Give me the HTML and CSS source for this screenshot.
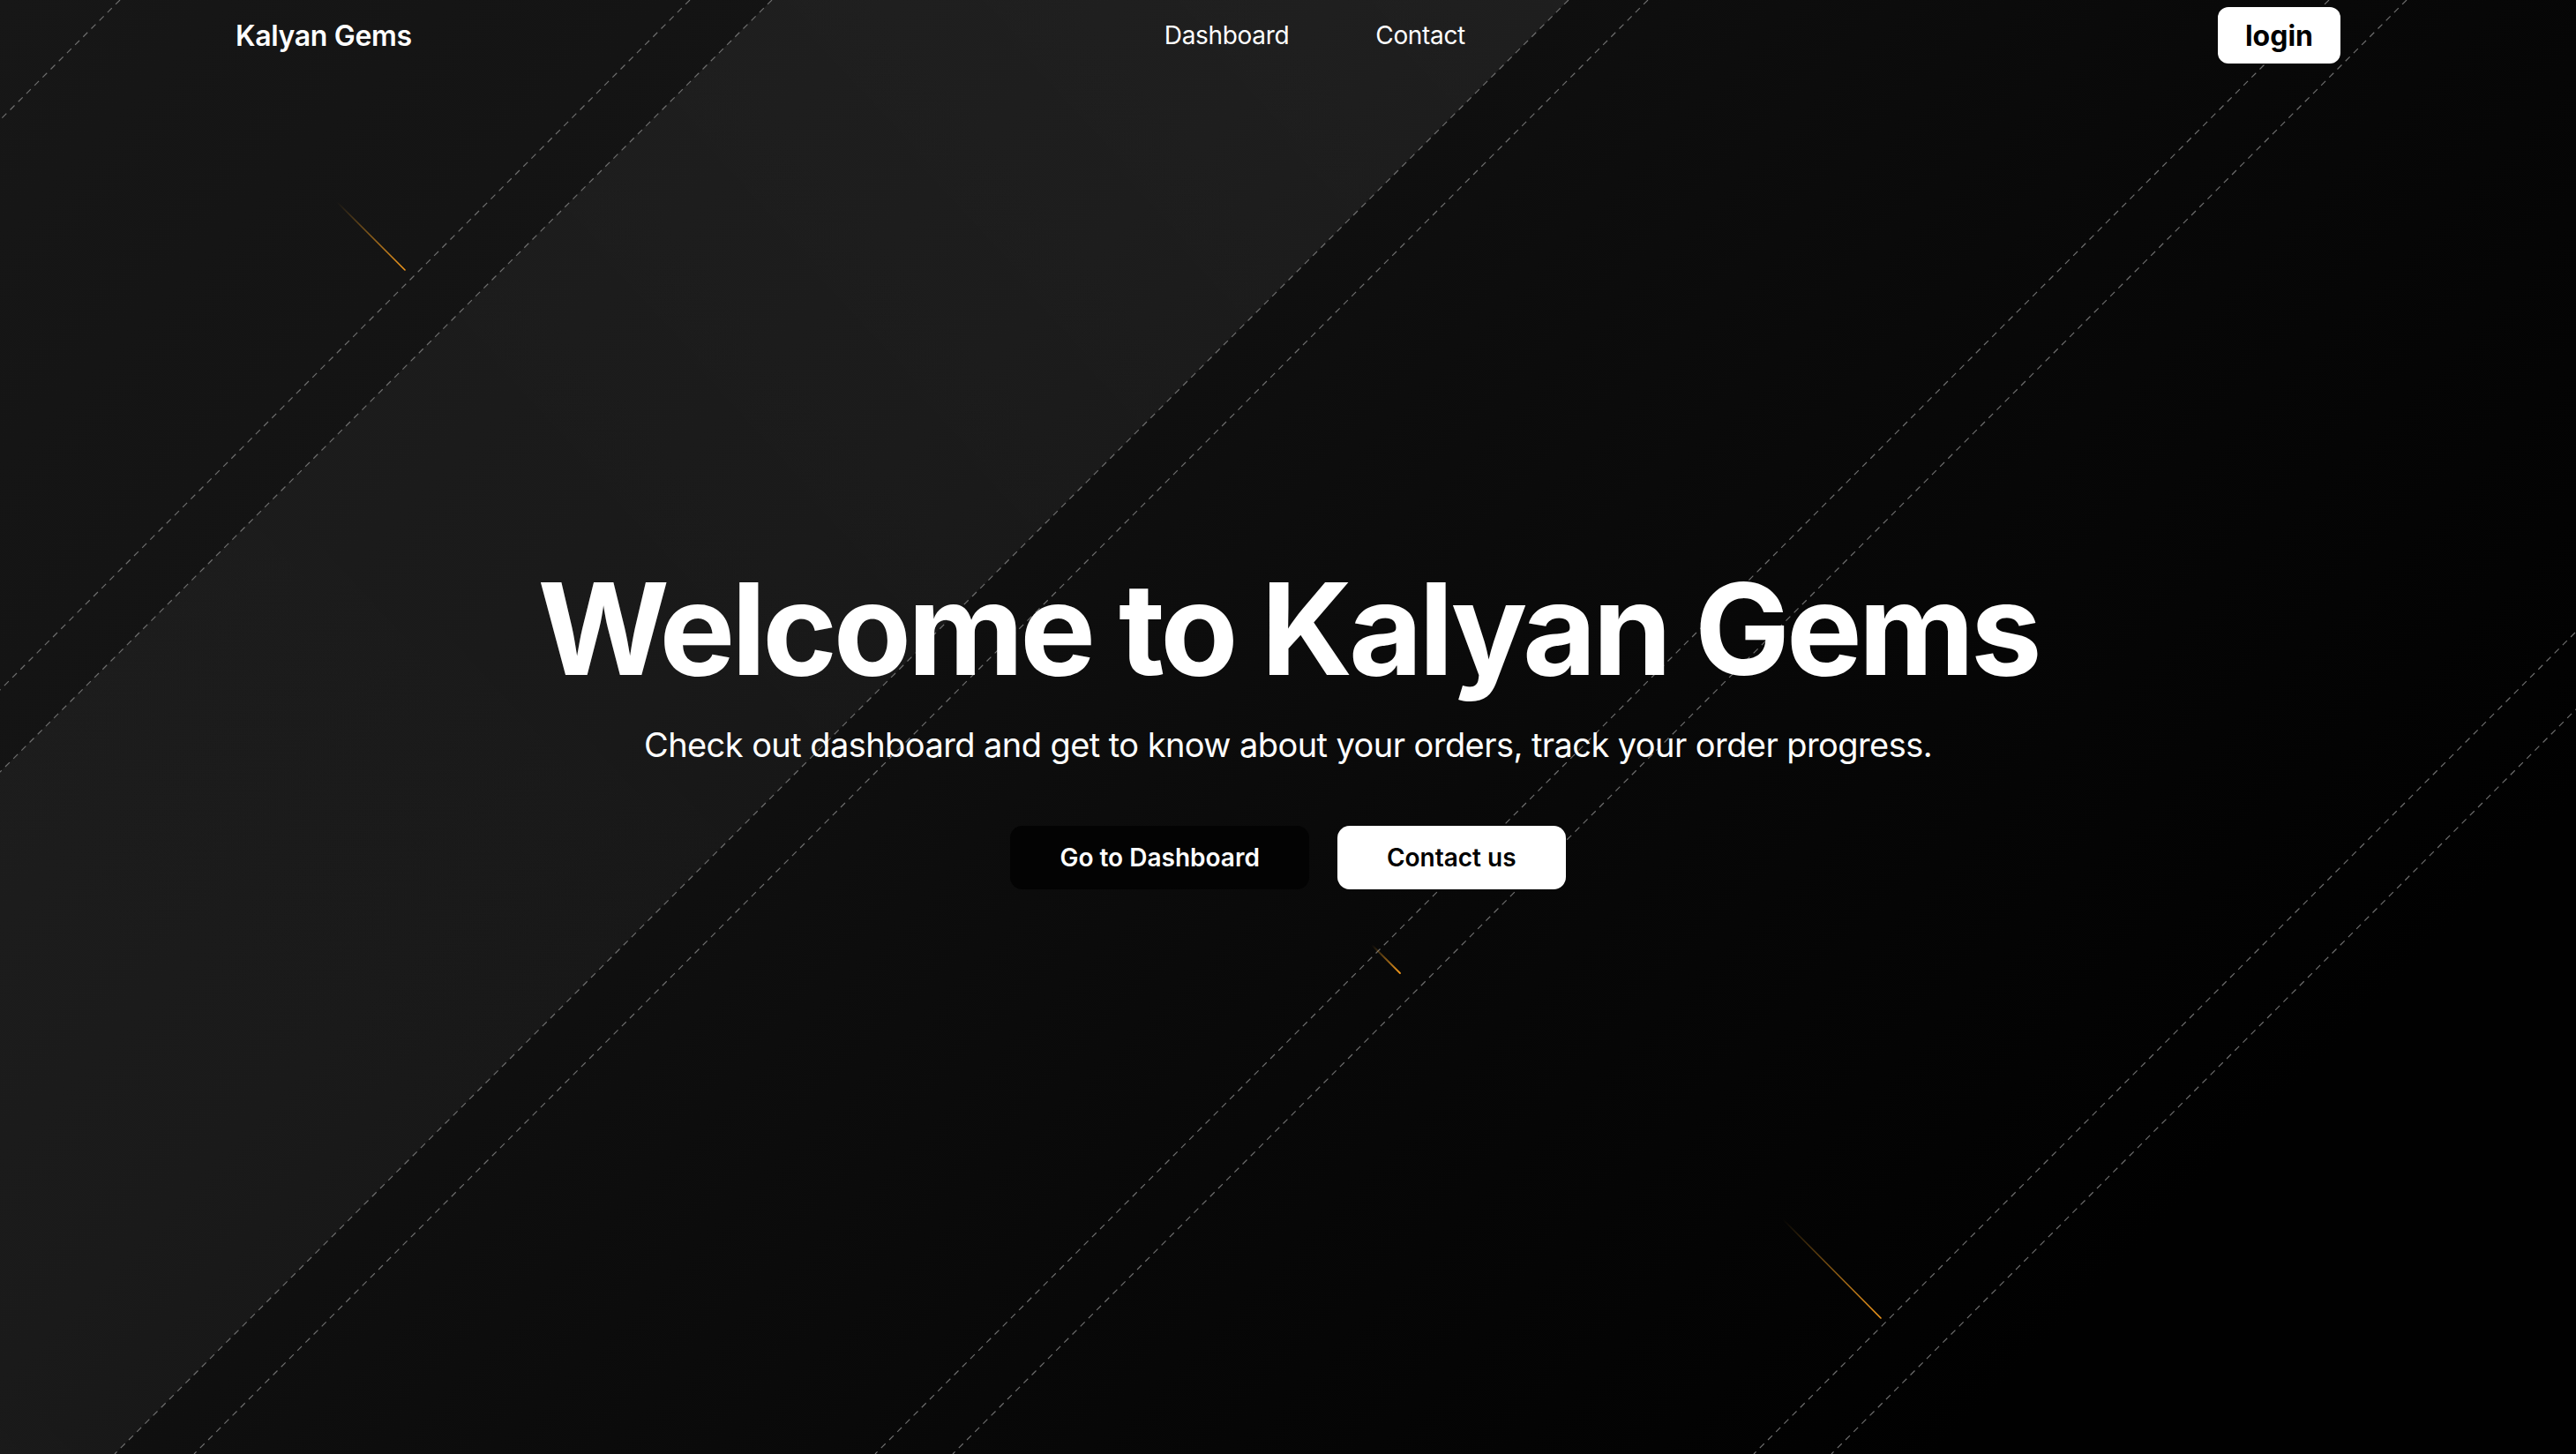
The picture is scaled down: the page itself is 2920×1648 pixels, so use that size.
FILE: index.html
```html
<!DOCTYPE html>
<html lang="en">
<head>
<meta charset="utf-8">
<title>Kalyan Gems</title>
<link rel="stylesheet" href="styles.css">
</head>
<body>
<div class="page">
  <svg class="bg" viewBox="0 0 2920 1648" preserveAspectRatio="none" aria-hidden="true">
    <defs>
      <linearGradient id="base" x1="0" y1="0" x2="1" y2="0.55">
        <stop offset="0" stop-color="#171717"/>
        <stop offset="0.4" stop-color="#111111"/>
        <stop offset="0.7" stop-color="#080808"/>
        <stop offset="1" stop-color="#010101"/>
      </linearGradient>
      <linearGradient id="band" gradientUnits="userSpaceOnUse" x1="1778" y1="0" x2="0" y2="1648">
        <stop offset="0" stop-color="#ffffff" stop-opacity="0.065"/>
        <stop offset="0.5" stop-color="#ffffff" stop-opacity="0.035"/>
        <stop offset="1" stop-color="#ffffff" stop-opacity="0.04"/>
      </linearGradient>
      <linearGradient id="m1" gradientUnits="userSpaceOnUse" x1="382" y1="229" x2="459" y2="306">
        <stop offset="0" stop-color="#f5a524" stop-opacity="0"/>
        <stop offset="1" stop-color="#f59a1c"/>
      </linearGradient>
      <linearGradient id="m2" gradientUnits="userSpaceOnUse" x1="2021" y1="1382" x2="2132" y2="1494">
        <stop offset="0" stop-color="#f5a524" stop-opacity="0"/>
        <stop offset="1" stop-color="#f59a1c"/>
      </linearGradient>
      <linearGradient id="m3" gradientUnits="userSpaceOnUse" x1="1555" y1="1071" x2="1587" y2="1103">
        <stop offset="0" stop-color="#f5a524" stop-opacity="0"/>
        <stop offset="1" stop-color="#f59a1c"/>
      </linearGradient>
    </defs>
    <rect x="0" y="0" width="2920" height="1648" fill="url(#base)"/>
    <polygon points="875,0 1778,0 130,1648 0,1648 0,875" fill="url(#band)"/>
    <g class="dash" stroke="#6f6f6f" stroke-width="1.2" stroke-dasharray="7 6" fill="none">
      <line x1="136" y1="0" x2="-1512" y2="1648"/>
      <line x1="782" y1="0" x2="-866" y2="1648"/>
      <line x1="875" y1="0" x2="-773" y2="1648"/>
      <line x1="1778" y1="0" x2="130" y2="1648"/>
      <line x1="1868" y1="0" x2="220" y2="1648"/>
      <line x1="2640" y1="0" x2="992" y2="1648"/>
      <line x1="2728" y1="0" x2="1080" y2="1648"/>
      <line x1="3636" y1="0" x2="1988" y2="1648"/>
      <line x1="3724" y1="0" x2="2076" y2="1648"/>
    </g>
    <line x1="382" y1="229" x2="459" y2="306" stroke="url(#m1)" stroke-width="1.6" stroke-linecap="round"/>
    <line x1="2021" y1="1382" x2="2132" y2="1494" stroke="url(#m2)" stroke-width="1.6" stroke-linecap="round"/>
    <line x1="1555" y1="1071" x2="1587" y2="1103" stroke="url(#m3)" stroke-width="1.8" stroke-linecap="round"/>
  </svg>

  <header class="nav">
    <a class="brand" href="#">Kalyan Gems</a>
    <nav class="links">
      <a href="#">Dashboard</a>
      <a href="#">Contact</a>
    </nav>
    <button class="login" type="button">login</button>
  </header>

  <main class="hero">
    <h1 class="title">Welcome to Kalyan Gems</h1>
    <p class="subtitle">Check out dashboard and get to know about your orders, track your order progress.</p>
    <div class="actions">
      <button class="btn btn-dark" type="button">Go to Dashboard</button>
      <button class="btn btn-light" type="button">Contact us</button>
    </div>
  </main>
</div>
</body>
</html>
```

FILE: styles.css
```css
* {
  box-sizing: border-box;
}

html,
body {
  margin: 0;
  padding: 0;
  background: #0c0c0c;
}

body {
  font-family: Inter, "Noto Sans", "Liberation Sans", sans-serif;
  color: #ffffff;
}

.page {
  position: relative;
  display: grid;
  height: 100vh;
  overflow: hidden;
}

.bg {
  position: absolute;
  inset: 0;
  width: 100%;
  height: 100%;
  z-index: 0;
}

.nav,
.hero {
  grid-area: 1 / 1;
  position: relative;
  z-index: 1;
}

.nav {
  align-self: start;
  display: flex;
  align-items: center;
  justify-content: space-between;
  height: 80px;
  padding: 0 267px;
}

.brand {
  color: #ffffff;
  text-decoration: none;
  font-size: 32px;
  font-weight: 600;
  letter-spacing: -0.01em;
}

.links {
  display: flex;
  gap: 98px;
}

.links a {
  color: #ffffff;
  text-decoration: none;
  font-size: 28px;
  font-weight: 400;
  letter-spacing: -0.012em;
}

.login {
  height: 64px;
  padding: 0 31px;
  border: 0;
  border-radius: 12px;
  background: #ffffff;
  color: #000000;
  font-family: inherit;
  font-size: 32px;
  font-weight: 700;
}

.hero {
  display: flex;
  flex-direction: column;
  align-items: center;
  justify-content: center;
  text-align: center;
}

.title {
  margin: 0;
  font-size: 144px;
  line-height: 1;
  font-weight: 700;
  letter-spacing: -0.0285em;
}

.subtitle {
  margin: 29px 0 0;
  font-size: 38px;
  line-height: 60px;
  font-weight: 400;
  letter-spacing: -0.015em;
}

.actions {
  display: flex;
  gap: 32px;
  margin-top: 62px;
}

.btn {
  height: 72px;
  padding: 0 56px;
  border: 0;
  border-radius: 14px;
  font-family: inherit;
  font-size: 28px;
  font-weight: 600;
}

.btn-dark {
  background: #030303;
  color: #ffffff;
}

.btn-light {
  background: #ffffff;
  color: #000000;
}
```
